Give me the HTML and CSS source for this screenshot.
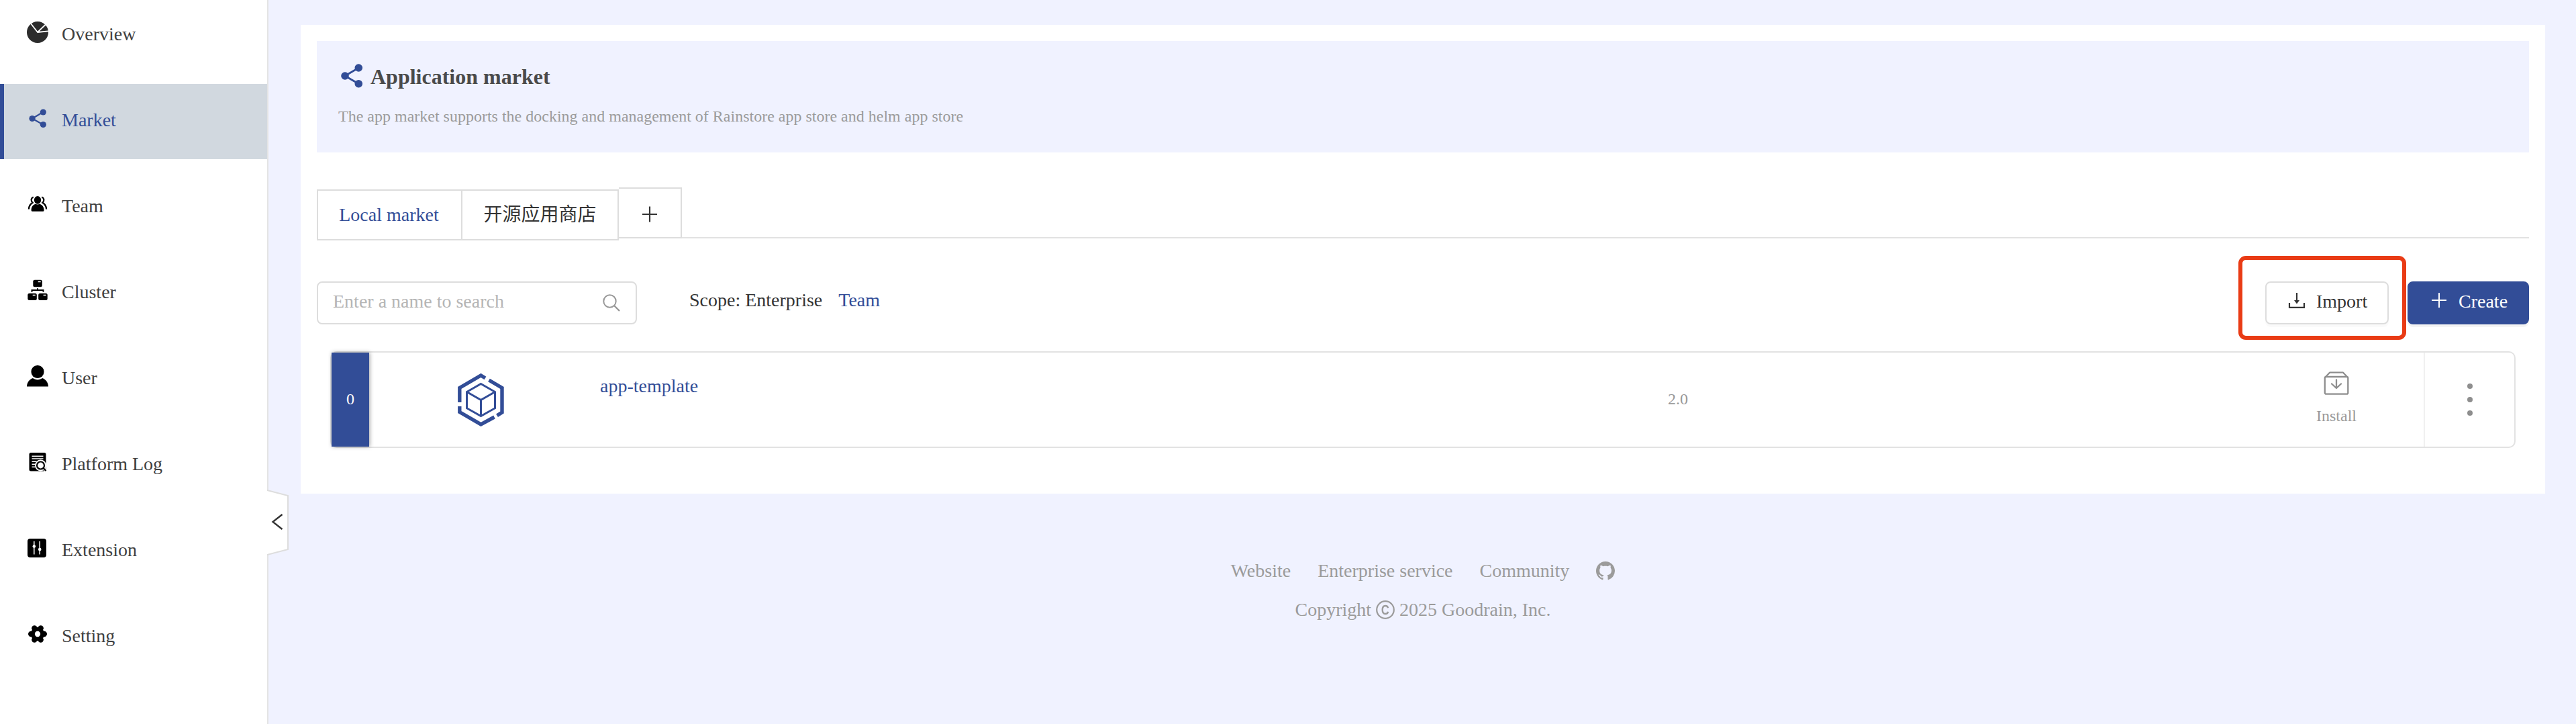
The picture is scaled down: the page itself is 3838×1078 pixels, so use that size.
FILE: index.html
```html
<!DOCTYPE html>
<html lang="en">
<head>
<meta charset="utf-8">
<title>Application market</title>
<link rel="stylesheet" href="styles.css">
</head>
<body>
<div class="layout">
  <aside class="sidebar">
    <nav class="menu">
      <a class="item"><svg class="icon" viewBox="0 0 32 32"><circle cx="16" cy="16" r="16" fill="#2c2c2c"/><path d="M5.500 2.500 16 16 28 4.500M16 16l17-1.800" fill="none" stroke="#fff" stroke-width="1.800"/></svg><span>Overview</span></a>
      <a class="item active"><svg class="icon" viewBox="0 0 32 32"><g fill="#324d97" stroke="#324d97"><circle cx="8" cy="16.500" r="4.600" stroke="none"/><circle cx="24.300" cy="7" r="4.600" stroke="none"/><circle cx="24.300" cy="25.500" r="4.600" stroke="none"/><path d="M24 7 8 16.500l16 9" fill="none" stroke-width="2.200"/></g></svg><span>Market</span></a>
      <a class="item"><svg class="icon" viewBox="0 0 32 32"><ellipse cx="16" cy="9.800" rx="5.200" ry="5.900"/><path d="M6.600 25c0-5 2.500-8.300 6.400-9.300 2 1 4 1 6 0 3.900 1 6.600 4.300 6.600 9.300 0 1.200-.600 1.800-1.800 1.800H8.400c-1.200 0-1.800-.600-1.800-1.800z"/><path d="M9.700 5.500C5.800 7 6 11.500 8.600 13.800 5 16 3 18.500 2.900 23.500M22.300 5.500c3.900 1.500 3.700 6 1.100 8.300 3.600 2.200 5.600 4.700 5.700 9.700" fill="none" stroke="#000" stroke-width="2.300"/></svg><span>Team</span></a>
      <a class="item"><svg class="icon" viewBox="0 0 32 32"><rect x="9.300" y=".7" width="13.500" height="10.600" rx="2.500"/><rect x="1.300" y="20.700" width="13.500" height="10.300" rx="2.500"/><rect x="17.200" y="20.700" width="13.500" height="10.300" rx="2.500"/><path d="M16 13.300v3M7.500 18.700v-2.600h17v2.600" fill="none" stroke="#000" stroke-width="2"/><path d="M16.700 3.500h4M8.700 23.500h4M24.600 23.500h4" stroke="#fff" stroke-width="1.600"/></svg><span>Cluster</span></a>
      <a class="item"><svg class="icon" viewBox="0 0 32 32"><rect x="6.500" y="0" width="19" height="19" rx="9"/><path d="M0 31.500c.300-6 3.500-10.500 9-12.500 4 3.300 10 3.300 14 0 5.500 2 8.700 6.500 9 12.500z"/></svg><span>User</span></a>
      <a class="item"><svg class="icon" viewBox="0 0 32 32"><rect x="3.500" y="2" width="25" height="27.500" rx="2.500"/><path d="M7.500 7.200h17M7.500 11h17M7.500 15.200h7M7.500 19.200h5M7.500 23.200h5" stroke="#fff" stroke-width="1.400"/><circle cx="20.500" cy="21" r="8.500" fill="#fff"/><path d="m24 24.500 5.500 5.500" stroke="#fff" stroke-width="4"/><circle cx="20.500" cy="21" r="5.500" fill="none" stroke="#000" stroke-width="2.200"/><path d="m24.500 25 4 4" stroke="#000" stroke-width="2.400"/></svg><span>Platform Log</span></a>
      <a class="item"><svg class="icon" viewBox="0 0 32 32"><rect x="1" y="2" width="28" height="28" rx="4"/><path d="M10.800 6v19.500M19.200 6v19.500" stroke="#fff" stroke-width="1.500"/><circle cx="10.800" cy="13.500" r="2.300" fill="#fff"/><circle cx="19.200" cy="18" r="2.300" fill="#fff"/></svg><span>Extension</span></a>
      <a class="item"><svg class="icon" viewBox="0 0 32 32"><circle cx="16" cy="16" r="10.200"/><circle cx="6.200" cy="16" r="4.200"/><circle cx="25.800" cy="16" r="4.200"/><circle cx="11.300" cy="7.400" r="4.200"/><circle cx="20.700" cy="7.400" r="4.200"/><circle cx="11.300" cy="24.600" r="4.200"/><circle cx="20.700" cy="24.600" r="4.200"/><circle cx="16" cy="16" r="4.200" fill="#fff"/></svg><span>Setting</span></a>
    </nav>
    <svg class="toggle" viewBox="0 0 34 100"><path d="M0 2 31 10v80L0 98" fill="#fff" stroke="#ddd" stroke-width="2"/><path d="M22.500 38 8.500 49l14 11" fill="none" stroke="#333" stroke-width="2.400"/></svg>
  </aside>

  <div class="page">
    <main class="card">
      <header class="banner">
        <h1 class="title"><svg class="title-icon" viewBox="0 0 40 40"><g fill="#324d97"><circle cx="10" cy="20" r="5.800"/><circle cx="30.300" cy="8" r="5.800"/><circle cx="30.300" cy="31.700" r="5.800"/><path d="M30.300 8 10 20l20.300 11.700" fill="none" stroke="#324d97" stroke-width="2.800"/></g></svg>Application market</h1>
        <p class="subtitle">The app market supports the docking and management of Rainstore app store and helm app store</p>
      </header>

      <div class="tabs">
        <a class="tab selected">Local market</a><a class="tab second">开源应用商店</a><a class="tab add"><svg width="24" height="24" viewBox="0 0 24 24"><path d="M12 .500v23M1 12h22" stroke="#333" stroke-width="2.200"/></svg></a>
      </div>

      <div class="toolbar">
        <div class="search"><span>Enter a name to search</span><svg width="28" height="28" viewBox="0 0 28 28"><circle cx="11.500" cy="11.500" r="9.200" fill="none" stroke="#999" stroke-width="2"/><path d="m18 18 8 8" stroke="#999" stroke-width="2.400"/></svg></div>
        <div class="scope"><span>Scope: Enterprise</span><a class="link">Team</a></div>
        <div class="actions">
          <button class="btn import"><svg width="26" height="26" viewBox="0 0 26 26"><path d="M2 16v6.800h22V16" fill="none" stroke="#333" stroke-width="2.200"/><path d="M13 1v13" stroke="#333" stroke-width="2.200"/><path d="M9 12h8l-4 5.500z" fill="#333"/></svg>Import</button>
          <button class="btn create"><svg width="26" height="26" viewBox="0 0 26 26"><path d="M13 1v22M2 12h22" stroke="#fff" stroke-width="2"/></svg>Create</button>
        </div>
      </div>

      <section class="app">
        <div class="count">0</div>
        <div class="logo"><svg width="70" height="80" viewBox="0 0 70 80"><g fill="none" stroke="#324d97"><path d="M2.800 43V21.500L34.500 3l6.500 4M46.500 10 66 21.500v36.500l-7.500 4.800M54.500 65 34.500 75.800 2.800 57.500V49" stroke-width="5.400"/><path d="M34.500 15.500 55.500 27.500v24.200L34.500 63.500 13.500 51.700V27.500zM13.500 27.500l21 12 21-12M34.500 39.500v24" stroke-width="3"/></g></svg></div>
        <a class="name link">app-template</a>
        <div class="version">2.0</div>
        <div class="install"><svg width="38" height="36" viewBox="0 0 38 36"><g fill="none" stroke="#8e8e8e" stroke-width="2.300" stroke-linejoin="round" stroke-linecap="round"><rect x="1.800" y="8" width="34.500" height="25.700" rx="2"/><path d="m3 8 6-6.300h20L35 8M19 12.500V25M12 18.500l7 6.500 7-6.500"/></g></svg><span>Install</span></div>
        <div class="more"><i></i><i></i><i></i></div>
      </section>
    </main>

    <footer class="footer">
      <div class="links"><a>Website</a><a>Enterprise service</a><a>Community</a><svg width="28" height="28" viewBox="0 0 16 16"><path fill="#9b9b9b" d="M8 0C3.580 0 0 3.580 0 8c0 3.540 2.290 6.530 5.470 7.590.4.070.55-.17.55-.38 0-.19-.01-.82-.01-1.490-2.010.37-2.530-.49-2.690-.94-.09-.23-.48-.94-.82-1.130-.28-.15-.68-.52-.01-.53.63-.01 1.080.58 1.230.82.72 1.210 1.870.87 2.330.66.07-.52.28-.87.51-1.070-1.780-.2-3.640-.89-3.640-3.950 0-.87.31-1.590.82-2.150-.08-.2-.36-1.020.08-2.120 0 0 .67-.21 2.200.82.64-.18 1.320-.27 2-.27s1.360.09 2 .27c1.530-1.040 2.200-.82 2.200-.82.44 1.100.16 1.920.08 2.120.51.56.82 1.270.82 2.150 0 3.070-1.870 3.750-3.650 3.950.29.25.54.73.54 1.480 0 1.070-.01 1.930-.01 2.200 0 .21.15.46.55.38A8.010 8.010 0 0 0 16 8c0-4.420-3.580-8-8-8z"/></svg></div>
      <div class="copyright">Copyright <svg width="28" height="28" viewBox="0 0 28 28"><g fill="none" stroke="#9b9b9b"><circle cx="14" cy="14" r="12.800" stroke-width="2.200"/><path d="M18 11.300c-.3-2-1.700-3.300-4-3.300-2.800 0-4.300 2.200-4.300 6s1.500 6 4.300 6c2.300 0 3.700-1.300 4-3.300" stroke-width="2.400"/></g></svg> 2025 Goodrain, Inc.</div>
    </footer>
  </div>
</div>
<div class="highlight"></div>
</body>
</html>
```
FILE: styles.css
```css
* { box-sizing: border-box; }
body {
  margin: 0;
  width: 3838px;
  height: 1078px;
  overflow: hidden;
  background: #f0f2ff;
  color: #333;
  font: 28px/42px "Liberation Serif", "Noto Sans CJK SC", serif;
}
svg { display: block; flex: none; }
.layout { display: flex; height: 1078px; }
.link { color: #324d97; }

/* Sidebar */
.sidebar {
  position: relative;
  flex: none;
  width: 400px;
  background: #fff;
  border-right: 2px solid #e4e4e4;
}
.menu { display: flex; flex-direction: column; gap: 16px; margin-top: -3px; }
.item {
  display: flex;
  align-items: center;
  gap: 20px;
  height: 112px;
  padding: 0 0 4px 40px;
  color: #404040;
}
.icon { width: 32px; height: 32px; margin-top: -6px; }
.active { background: #d1d8df; color: #324d97; border-left: 6px solid #324d97; padding-left: 34px; }
.toggle { position: absolute; left: 398px; top: 728px; width: 34px; height: 100px; }

/* Main card */
.page { flex: 1; padding: 37px 46px 0 48px; }
.card { height: 698px; padding: 24px; background: #fff; }
.banner { height: 166px; padding: 30px 32px; background: #f0f2ff; }
.title {
  display: flex;
  align-items: center;
  gap: 8px;
  margin: 0;
  height: 46px;
  font-size: 32px;
  color: #4a4a4a;
}
.title-icon { width: 40px; height: 40px; margin-top: -2px; }
.subtitle { margin: 18px 0 0; font-size: 24px; line-height: 36px; color: #9b9b9b; }

/* Tabs */
.tabs {
  display: flex;
  align-items: flex-start;
  height: 76px;
  margin-top: 52px;
  border-bottom: 2px solid #e2e2e2;
}
.tab {
  display: flex;
  align-items: center;
  justify-content: center;
  height: 76px;
  margin-top: 3px;
  border: 2px solid #ddd;
  background: #fff;
}
.selected { width: 217px; padding-right: 2px; color: #324d97; }
.second { width: 235px; margin-left: -2px; }
.add { width: 94px; margin-top: 0; padding-top: 4px; border-left: 0; }

/* Toolbar */
.toolbar { display: flex; margin-top: 64px; height: 64px; }
.search {
  display: flex;
  align-items: center;
  justify-content: space-between;
  width: 477px;
  padding: 0 22px;
  border: 2px solid #ddd;
  border-radius: 8px;
  color: #b5b5b5;
}
.search span { padding-bottom: 4px; }
.scope { display: flex; gap: 24px; margin-left: 78px; padding-top: 7px; }
.actions { display: flex; gap: 28px; margin-left: auto; }
.btn {
  display: flex;
  align-items: center;
  gap: 16px;
  height: 64px;
  padding: 0 0 4px 32px;
  border: 2px solid #ddd;
  border-radius: 8px;
  background: #fff;
  box-shadow: 0 4px 0 rgba(0, 0, 0, 0.02);
  color: #333;
  font: inherit;
}
.btn svg { margin-top: -2px; }
.import { width: 184px; }
.create {
  width: 181px;
  border-color: #324d97;
  background: #324d97;
  box-shadow: 0 4px 0 rgba(0, 0, 0, 0.045);
  color: #fff;
}

/* App row */
.app {
  display: flex;
  height: 144px;
  margin: 40px 20px 0;
  border: 2px solid #e2e2e2;
  border-radius: 10px;
}
.count {
  width: 56px;
  background: #324d97;
  box-shadow: 1px 0 6px rgba(0, 0, 0, 0.35);
  color: #fff;
  font-size: 24px;
  line-height: 138px;
  text-align: center;
}
.logo { width: 344px; padding: 31px 0 0 132px; }
.name { width: 1591px; padding-top: 29px; }
.version { flex: 1; color: #999; font-size: 24px; line-height: 138px; }
.install {
  display: flex;
  flex-direction: column;
  align-items: center;
  width: 260px;
  padding-top: 28px;
  color: #999;
  font-size: 24px;
  line-height: 36px;
}
.install span { margin-top: 12px; }
.more {
  display: flex;
  flex-direction: column;
  align-items: center;
  gap: 12px;
  width: 135px;
  padding-top: 46px;
  border-left: 2px solid #f0f0f0;
}
.more i { width: 8px; height: 8px; border-radius: 50%; background: #8e8e8e; }

/* Footer */
.footer { padding-top: 94px; color: #9b9b9b; }
.links { display: flex; justify-content: center; align-items: center; gap: 40px; }
.copyright { display: flex; justify-content: center; align-items: center; gap: 7px; margin-top: 16px; }

/* Annotation frame over the import button */
.highlight {
  position: absolute;
  left: 3335px;
  top: 381px;
  width: 250px;
  height: 125px;
  border: 6px solid #e93b15;
  border-radius: 11px;
}
```
